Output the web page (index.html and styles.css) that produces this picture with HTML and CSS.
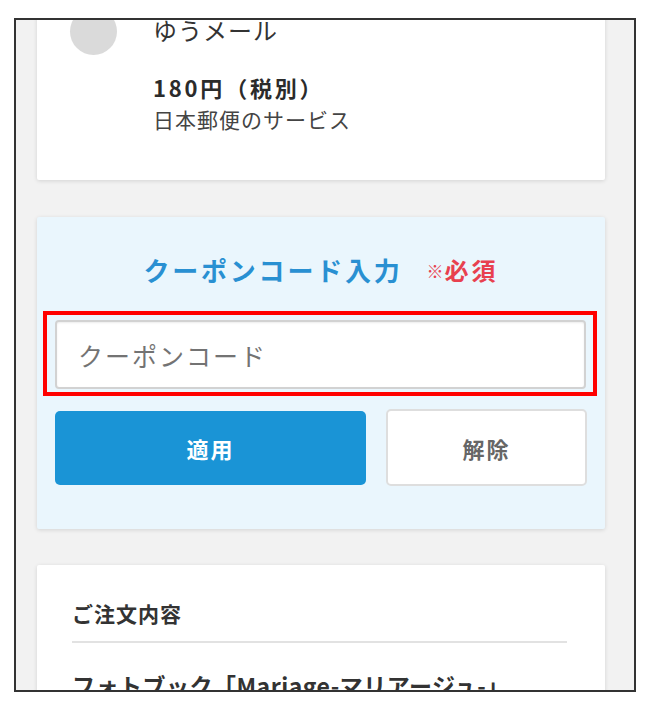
FILE: index.html
```html
<!DOCTYPE html>
<html lang="ja">
<head>
<meta charset="utf-8">
<title>クーポンコード入力</title>
<link rel="stylesheet" href="styles.css">
</head>
<body>
<div class="frame">
  <div class="scroll">
    <section class="card ship">
      <div class="ship-row">
        <span class="radio"></span>
        <div class="ship-info">
          <div class="ship-name">ゆうメール</div>
          <div class="ship-price">180円（税別）</div>
          <div class="ship-desc">日本郵便のサービス</div>
        </div>
      </div>
    </section>

    <section class="card coupon">
      <h2 class="coupon-title"><span class="title-text">クーポンコード入力</span><span class="req"><span class="mark">※</span>必須</span></h2>
      <div class="highlight">
        <input class="coupon-input" type="text" placeholder="クーポンコード">
      </div>
      <div class="btn-row">
        <button class="btn btn-apply">適用</button>
        <button class="btn btn-clear">解除</button>
      </div>
    </section>

    <section class="card order">
      <h3 class="order-title">ご注文内容</h3>
      <div class="divider"></div>
      <div class="product">フォトブック「Mariage-マリアージュ-」</div>
    </section>
  </div>
</div>
</body>
</html>
```

FILE: styles.css
```css
* { box-sizing: border-box; }

html, body {
  margin: 0;
  padding: 0;
  background: #ffffff;
  font-family: "Noto Sans CJK JP", "Noto Sans", sans-serif;
  color: #333333;
}

.frame {
  margin: 18px 0 0 14px;
  width: 622px;
  height: 674px;
  border: 2px solid #333333;
  background: #f2f2f2;
  overflow: hidden;
}

.scroll {
  padding-left: 21px;
}

.card {
  width: 568px;
  background: #ffffff;
  box-shadow: 0 1px 4px rgba(0, 0, 0, 0.13);
  border-radius: 2px;
}

/* shipping card */
.ship {
  margin-top: -40px;
  padding: 33px 0 46px 33px;
}

.ship-row {
  display: flex;
  align-items: flex-start;
  gap: 36px;
}

.radio {
  flex: none;
  width: 47px;
  height: 47px;
  margin-top: -5px;
  border-radius: 50%;
  background: #dadada;
}

.ship-name {
  font-size: 24px;
  line-height: 34px;
  letter-spacing: 1px;
  color: #333333;
}

.ship-price {
  margin-top: 25px;
  font-size: 22px;
  line-height: 30px;
  font-weight: 700;
  letter-spacing: 2.8px;
  color: #2b2b2b;
}

.ship-desc {
  margin-top: 2px;
  font-size: 21px;
  line-height: 30px;
  letter-spacing: 1px;
  color: #444444;
}

/* coupon card */
.coupon {
  margin-top: 37px;
  padding: 35px 0 43px 0;
  background: #eaf6fd;
}

.coupon-title {
  margin: 0;
  height: 36px;
  display: flex;
  justify-content: center;
  align-items: center;
  font-weight: 700;
}

.title-text {
  font-size: 26px;
  line-height: 36px;
  letter-spacing: 2.8px;
  color: #2990d2;
}

.req {
  display: flex;
  align-items: center;
  margin-left: 24px;
  font-size: 24px;
  line-height: 36px;
  letter-spacing: 3px;
  color: #e8404f;
}

.req .mark {
  font-size: 17px;
  letter-spacing: 1px;
  margin-top: 2px;
}

.highlight {
  margin: 23px 0 0 6px;
  width: 554px;
  border: 4px solid #ff0000;
  padding: 5px 7px 3px 8px;
}

.coupon-input {
  display: block;
  width: 531px;
  height: 69px;
  margin: 0;
  border: 2px solid #d2d2d2;
  border-radius: 4px;
  background: #ffffff;
  box-shadow: inset 0 1px 2px rgba(0, 0, 0, 0.08);
  padding: 0 0 0 21px;
  font-family: inherit;
  font-size: 25px;
  letter-spacing: 2px;
  color: #333333;
  outline: none;
}

.coupon-input::placeholder {
  color: #737373;
}

.btn-row {
  display: flex;
  align-items: center;
  gap: 20px;
  margin: 13px 0 0 18px;
}

.btn {
  font-family: inherit;
  font-size: 22px;
  font-weight: 700;
  letter-spacing: 2px;
  border-radius: 5px;
  padding: 0;
  cursor: pointer;
}

.btn-apply {
  width: 311px;
  height: 74px;
  background: #1a94d6;
  border: none;
  color: #ffffff;
}

.btn-clear {
  width: 201px;
  height: 77px;
  background: #ffffff;
  border: 2px solid #dedede;
  color: #666666;
}

/* order card */
.order {
  margin-top: 36px;
  padding: 33px 38px 40px 35px;
}

.order-title {
  margin: 0;
  font-size: 21px;
  line-height: 30px;
  font-weight: 700;
  letter-spacing: 1px;
  color: #333333;
}

.divider {
  margin-top: 13px;
  height: 2px;
  background: #e2e2e2;
}

.product {
  margin-top: 26px;
  font-size: 23px;
  line-height: 32px;
  font-weight: 700;
  letter-spacing: 0.5px;
  color: #333333;
  white-space: nowrap;
}
```
